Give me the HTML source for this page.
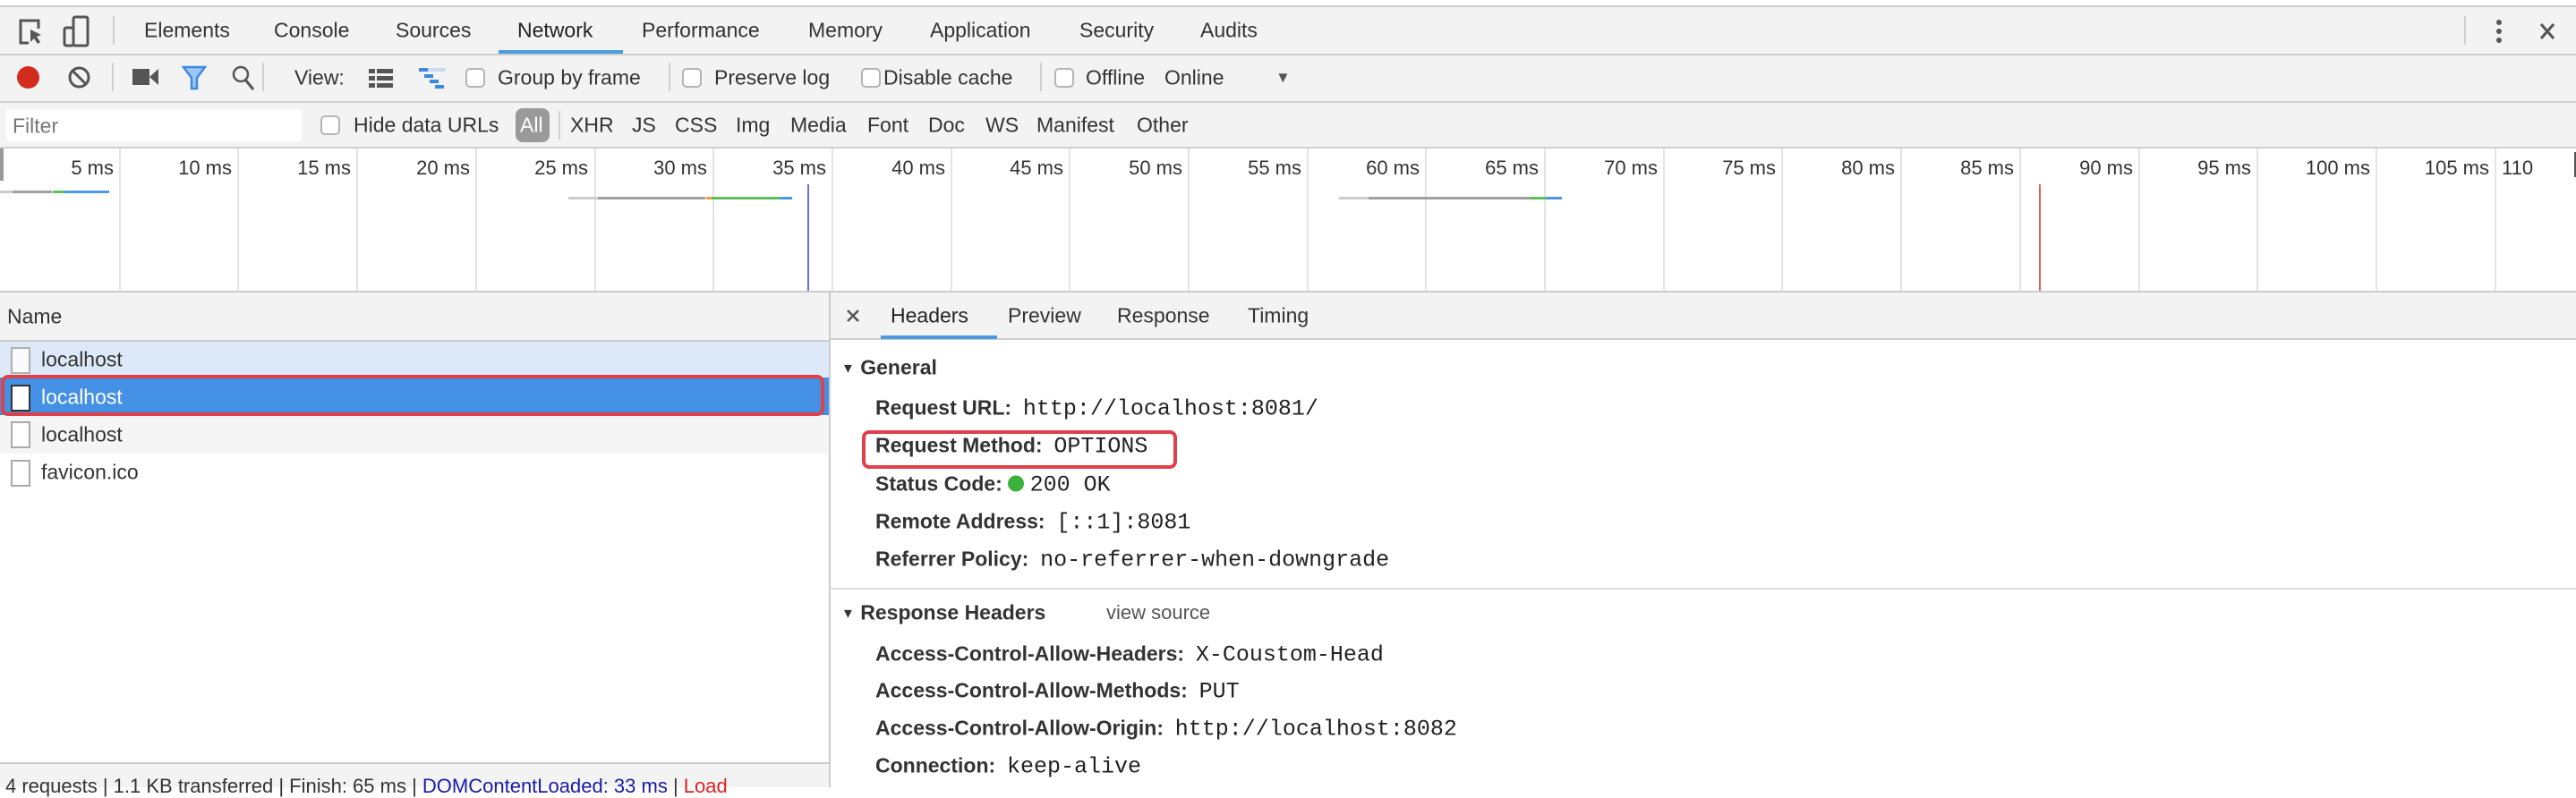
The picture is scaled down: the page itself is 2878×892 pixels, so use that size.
<!DOCTYPE html>
<html><head><meta charset="utf-8"><style>
*{margin:0;padding:0;box-sizing:border-box}
body{width:2878px;height:880px;overflow:hidden;background:#fff;font-family:"Liberation Sans",sans-serif;color:#333;position:relative}
.a{position:absolute;white-space:nowrap}
.t{font-size:23px;color:#333;transform:translateY(-50%)}
.hl{position:absolute;left:0;width:2878px;height:2px;background:#cfcfcf}
.vs{position:absolute;width:2px;background:#d0d0d0}
.cb{position:absolute;width:22px;height:22px;border:2px solid #b5b5b5;border-radius:5px;background:#fff;transform:translateY(-50%)}
.b{font-weight:bold;font-size:23px;color:#333}
.m{font-family:"Liberation Mono",monospace;font-size:25px;color:#222}
.gl{position:absolute;top:166px;height:160px;width:2px;background:#e4e4e4}
.tl{position:absolute;top:175px;font-size:22px;color:#333;text-align:right;width:120px}
</style></head><body>
<div class="a" style="left:0;top:0;width:2878px;height:6px;background:#fff"></div>
<div class="hl" style="top:6px"></div>
<div class="a" style="left:0;top:8px;width:2878px;height:158px;background:#f3f3f3"></div>
<div class="hl" style="top:60px"></div>
<div class="hl" style="top:113px"></div>
<div class="hl" style="top:164px"></div>

<svg class="a" style="left:20px;top:20px" width="30" height="32" viewBox="0 0 30 32"><path d="M12 28H3V3h20v9" fill="none" stroke="#555" stroke-width="3"/><path d="M14 13l12 6-5 2 4 6-3 2-4-6-4 4z" fill="#555"/></svg>
<svg class="a" style="left:70px;top:17px" width="30" height="36" viewBox="0 0 30 36"><rect x="12" y="2" width="16" height="32" rx="2" fill="none" stroke="#555" stroke-width="3"/><rect x="2" y="14" width="10" height="20" rx="2" fill="none" stroke="#555" stroke-width="3"/></svg>
<div class="vs" style="left:126px;top:18px;height:32px"></div>
<div class="a t" style="left:161px;top:34px">Elements</div>
<div class="a t" style="left:306px;top:34px">Console</div>
<div class="a t" style="left:442px;top:34px">Sources</div>
<div class="a t" style="left:578px;top:34px;color:#222">Network</div>
<div class="a" style="left:557px;top:56px;width:139px;height:4px;background:#4a9be0"></div>
<div class="a t" style="left:717px;top:34px">Performance</div>
<div class="a t" style="left:903px;top:34px">Memory</div>
<div class="a t" style="left:1039px;top:34px">Application</div>
<div class="a t" style="left:1206px;top:34px">Security</div>
<div class="a t" style="left:1341px;top:34px">Audits</div>
<div class="vs" style="left:2753px;top:18px;height:32px"></div>
<svg class="a" style="left:2786px;top:20px" width="12" height="30"><circle cx="6" cy="5" r="3" fill="#555"/><circle cx="6" cy="15" r="3" fill="#555"/><circle cx="6" cy="25" r="3" fill="#555"/></svg>
<svg class="a" style="left:2836px;top:24px" width="20" height="22"><path d="M3 3l14 16M17 3L3 19" stroke="#555" stroke-width="3"/></svg>

<div class="a" style="left:19px;top:74px;width:25px;height:25px;border-radius:50%;background:#d32b1e"></div>
<svg class="a" style="left:75px;top:73px" width="27" height="27"><circle cx="13.5" cy="13.5" r="10.5" fill="none" stroke="#555" stroke-width="3"/><path d="M6 6l15 15" stroke="#555" stroke-width="3"/></svg>
<div class="vs" style="left:125px;top:70px;height:32px"></div>
<svg class="a" style="left:148px;top:76px" width="30" height="20"><rect x="0" y="1" width="19" height="18" fill="#555"/><path d="M19 10l10-9v18z" fill="#555"/></svg>
<svg class="a" style="left:203px;top:72px" width="28" height="30"><path d="M2 3h24l-9 12v12h-6V15z" fill="#9ec8f2" stroke="#3c8ae0" stroke-width="2.5"/></svg>
<svg class="a" style="left:258px;top:72px" width="28" height="30"><circle cx="11" cy="11" r="8" fill="none" stroke="#555" stroke-width="2.5"/><path d="M16 17l9 11" stroke="#555" stroke-width="3"/></svg>
<div class="vs" style="left:293px;top:70px;height:32px"></div>
<div class="a t" style="left:329px;top:87px">View:</div>
<svg class="a" style="left:412px;top:77px" width="28" height="22"><rect x="0" y="0" width="7" height="5" fill="#555"/><rect x="9" y="0" width="18" height="5" fill="#555"/><rect x="0" y="8" width="7" height="5" fill="#555"/><rect x="9" y="8" width="18" height="5" fill="#555"/><rect x="0" y="16" width="7" height="5" fill="#555"/><rect x="9" y="16" width="18" height="5" fill="#555"/></svg>
<svg class="a" style="left:468px;top:76px" width="32" height="24"><rect x="0" y="0" width="30" height="4" fill="#c6dcf3"/><rect x="0" y="0" width="10" height="4" fill="#3c8ae0"/><rect x="6" y="7" width="10" height="4" fill="#3c8ae0"/><rect x="12" y="13" width="10" height="4" fill="#3c8ae0"/><rect x="18" y="19" width="10" height="4" fill="#3c8ae0"/></svg>
<div class="cb" style="left:520px;top:87px"></div>
<div class="a t" style="left:556px;top:87px">Group by frame</div>
<div class="vs" style="left:747px;top:70px;height:32px"></div>
<div class="cb" style="left:762px;top:87px"></div>
<div class="a t" style="left:798px;top:87px">Preserve log</div>
<div class="cb" style="left:962px;top:87px"></div>
<div class="a t" style="left:987px;top:87px">Disable cache</div>
<div class="vs" style="left:1162px;top:70px;height:32px"></div>
<div class="cb" style="left:1178px;top:87px"></div>
<div class="a t" style="left:1213px;top:87px">Offline</div>
<div class="a t" style="left:1301px;top:87px">Online</div>
<div class="a t" style="left:1425px;top:87px;font-size:17px;color:#555">▼</div>

<div class="a" style="left:7px;top:122px;width:330px;height:36px;background:#fff"></div>
<div class="a t" style="left:14px;top:141px;color:#777">Filter</div>
<div class="cb" style="left:358px;top:140px"></div>
<div class="a t" style="left:395px;top:140px">Hide data URLs</div>
<div class="a" style="left:576px;top:121px;width:38px;height:38px;border-radius:8px;background:#9a9a9a"></div>
<div class="a t" style="left:581px;top:140px;color:#fff">All</div>
<div class="vs" style="left:624px;top:124px;height:32px"></div>
<div class="a t" style="left:637px;top:140px">XHR</div>
<div class="a t" style="left:706px;top:140px">JS</div>
<div class="a t" style="left:754px;top:140px">CSS</div>
<div class="a t" style="left:822px;top:140px">Img</div>
<div class="a t" style="left:883px;top:140px">Media</div>
<div class="a t" style="left:969px;top:140px">Font</div>
<div class="a t" style="left:1037px;top:140px">Doc</div>
<div class="a t" style="left:1101px;top:140px">WS</div>
<div class="a t" style="left:1158px;top:140px">Manifest</div>
<div class="a t" style="left:1270px;top:140px">Other</div>

<div class="a" style="left:0;top:166px;width:4px;height:36px;background:#999"></div>
<div class="gl" style="left:133px"></div><div class="gl" style="left:265px"></div><div class="gl" style="left:398px"></div><div class="gl" style="left:531px"></div><div class="gl" style="left:664px"></div><div class="gl" style="left:796px"></div><div class="gl" style="left:929px"></div><div class="gl" style="left:1062px"></div><div class="gl" style="left:1194px"></div><div class="gl" style="left:1327px"></div><div class="gl" style="left:1460px"></div><div class="gl" style="left:1592px"></div><div class="gl" style="left:1725px"></div><div class="gl" style="left:1858px"></div><div class="gl" style="left:1990px"></div><div class="gl" style="left:2123px"></div><div class="gl" style="left:2256px"></div><div class="gl" style="left:2389px"></div><div class="gl" style="left:2521px"></div><div class="gl" style="left:2654px"></div><div class="gl" style="left:2787px"></div>
<div class="tl" style="left:7px">5 ms</div><div class="tl" style="left:139px">10 ms</div><div class="tl" style="left:272px">15 ms</div><div class="tl" style="left:405px">20 ms</div><div class="tl" style="left:537px">25 ms</div><div class="tl" style="left:670px">30 ms</div><div class="tl" style="left:803px">35 ms</div><div class="tl" style="left:936px">40 ms</div><div class="tl" style="left:1068px">45 ms</div><div class="tl" style="left:1201px">50 ms</div><div class="tl" style="left:1334px">55 ms</div><div class="tl" style="left:1466px">60 ms</div><div class="tl" style="left:1599px">65 ms</div><div class="tl" style="left:1732px">70 ms</div><div class="tl" style="left:1864px">75 ms</div><div class="tl" style="left:1997px">80 ms</div><div class="tl" style="left:2130px">85 ms</div><div class="tl" style="left:2263px">90 ms</div><div class="tl" style="left:2395px">95 ms</div><div class="tl" style="left:2528px">100 ms</div><div class="tl" style="left:2661px">105 ms</div>
<div class="a" style="left:2795px;top:175px;font-size:22px">110</div>
<div class="a" style="left:2876px;top:170px;width:2px;height:28px;background:#555"></div>
<div class="a" style="left:0;top:213px;width:14px;height:3px;background:#ccc"></div>
<div class="a" style="left:14px;top:213px;width:44px;height:3px;background:#a0a0a0"></div>
<div class="a" style="left:59px;top:213px;width:13px;height:3px;background:#5ec05a"></div>
<div class="a" style="left:72px;top:213px;width:50px;height:3px;background:#4a9be0"></div>
<div class="a" style="left:635px;top:220px;width:33px;height:3px;background:#ccc"></div>
<div class="a" style="left:668px;top:220px;width:120px;height:3px;background:#a0a0a0"></div>
<div class="a" style="left:789px;top:220px;width:6px;height:3px;background:#f0a030"></div>
<div class="a" style="left:795px;top:220px;width:76px;height:3px;background:#5ec05a"></div>
<div class="a" style="left:871px;top:220px;width:14px;height:3px;background:#4a9be0"></div>
<div class="a" style="left:1496px;top:220px;width:33px;height:3px;background:#ccc"></div>
<div class="a" style="left:1529px;top:220px;width:180px;height:3px;background:#a0a0a0"></div>
<div class="a" style="left:1709px;top:220px;width:18px;height:3px;background:#5ec05a"></div>
<div class="a" style="left:1727px;top:220px;width:18px;height:3px;background:#4a9be0"></div>
<div class="a" style="left:902px;top:206px;width:2px;height:120px;background:#6b6be0"></div>
<div class="a" style="left:2278px;top:206px;width:2px;height:120px;background:#e06060"></div>
<div class="hl" style="top:325px;background:#ccc"></div>

<div class="a" style="left:0;top:327px;width:927px;height:53px;background:#f3f3f3"></div>
<div class="a t" style="left:8px;top:354px">Name</div>
<div class="a" style="left:0;top:380px;width:927px;height:2px;background:#ccc"></div>
<div class="a" style="left:0;top:382px;width:927px;height:40px;background:#dde9f8"></div>
<div class="a" style="left:0;top:422px;width:927px;height:42px;background:#4490e4"></div>
<div class="a" style="left:0;top:464px;width:927px;height:43px;background:#f5f5f5"></div>
<div class="a" style="left:1px;top:419px;width:920px;height:46px;border:4px solid #e0404a;border-radius:8px"></div>
<div class="a" style="left:12px;top:388px;width:22px;height:30px;border:2px solid #b0b0b0;background:#fafafa"></div>
<div class="a" style="left:12px;top:430px;width:22px;height:30px;border:2px solid #333;background:#fff"></div>
<div class="a" style="left:12px;top:471px;width:22px;height:30px;border:2px solid #aaa;background:#fff"></div>
<div class="a" style="left:12px;top:514px;width:22px;height:30px;border:2px solid #aaa;background:#fff"></div>
<div class="a t" style="left:46px;top:402px">localhost</div>
<div class="a t" style="left:46px;top:444px;color:#fff">localhost</div>
<div class="a t" style="left:46px;top:486px">localhost</div>
<div class="a t" style="left:46px;top:528px">favicon.ico</div>
<div class="a" style="left:0;top:852px;width:927px;height:2px;background:#ccc"></div>
<div class="a" style="left:0;top:854px;width:927px;height:26px;background:#f3f3f3"></div>
<div class="a" style="left:6px;top:866px;font-size:22px;color:#333">4 requests | 1.1 KB transferred | Finish: 65 ms | <span style="color:#1a1aa6">DOMContentLoaded: 33 ms</span> | <span style="color:#d22">Load</span></div>
<div class="a" style="left:926px;top:327px;width:2px;height:553px;background:#ccc"></div>

<div class="a" style="left:928px;top:327px;width:1950px;height:51px;background:#f3f3f3"></div>
<div class="a" style="left:928px;top:378px;width:1950px;height:2px;background:#ccc"></div>
<svg class="a" style="left:945px;top:345px" width="16" height="16"><path d="M2 2l12 12M14 2L2 14" stroke="#555" stroke-width="2.5"/></svg>
<div class="a t" style="left:995px;top:353px;color:#222">Headers</div>
<div class="a" style="left:984px;top:375px;width:130px;height:4px;background:#4a9be0"></div>
<div class="a t" style="left:1126px;top:353px">Preview</div>
<div class="a t" style="left:1248px;top:353px">Response</div>
<div class="a t" style="left:1394px;top:353px">Timing</div>

<div class="a t b" style="left:940px;top:411px"><span style="font-size:15px;position:relative;top:-2px">▼</span> General</div>
<div class="a t" style="left:978px;top:457px"><span class="b">Request URL:</span>&nbsp; <span class="m">http://localhost:8081/</span></div>
<div class="a t" style="left:978px;top:499px"><span class="b">Request Method:</span>&nbsp; <span class="m">OPTIONS</span></div>
<div class="a" style="left:963px;top:481px;width:352px;height:43px;border:4px solid #e0404a;border-radius:8px"></div>
<div class="a t" style="left:978px;top:542px"><span class="b">Status Code:</span> <span style="display:inline-block;width:18px;height:18px;border-radius:50%;background:#3cb03c;vertical-align:-1px"></span> <span class="m">200 OK</span></div>
<div class="a t" style="left:978px;top:584px"><span class="b">Remote Address:</span>&nbsp; <span class="m">[::1]:8081</span></div>
<div class="a t" style="left:978px;top:626px"><span class="b">Referrer Policy:</span>&nbsp; <span class="m">no-referrer-when-downgrade</span></div>
<div class="a" style="left:928px;top:657px;width:1950px;height:2px;background:#ddd"></div>
<div class="a t b" style="left:940px;top:685px"><span style="font-size:15px;position:relative;top:-2px">▼</span> Response Headers</div>
<div class="a t" style="left:1236px;top:685px;font-size:22px;color:#555">view source</div>
<div class="a t" style="left:978px;top:732px"><span class="b">Access-Control-Allow-Headers:</span>&nbsp; <span class="m">X-Coustom-Head</span></div>
<div class="a t" style="left:978px;top:773px"><span class="b">Access-Control-Allow-Methods:</span>&nbsp; <span class="m">PUT</span></div>
<div class="a t" style="left:978px;top:815px"><span class="b">Access-Control-Allow-Origin:</span>&nbsp; <span class="m">http://localhost:8082</span></div>
<div class="a t" style="left:978px;top:857px"><span class="b">Connection:</span>&nbsp; <span class="m">keep-alive</span></div>
</body></html>
